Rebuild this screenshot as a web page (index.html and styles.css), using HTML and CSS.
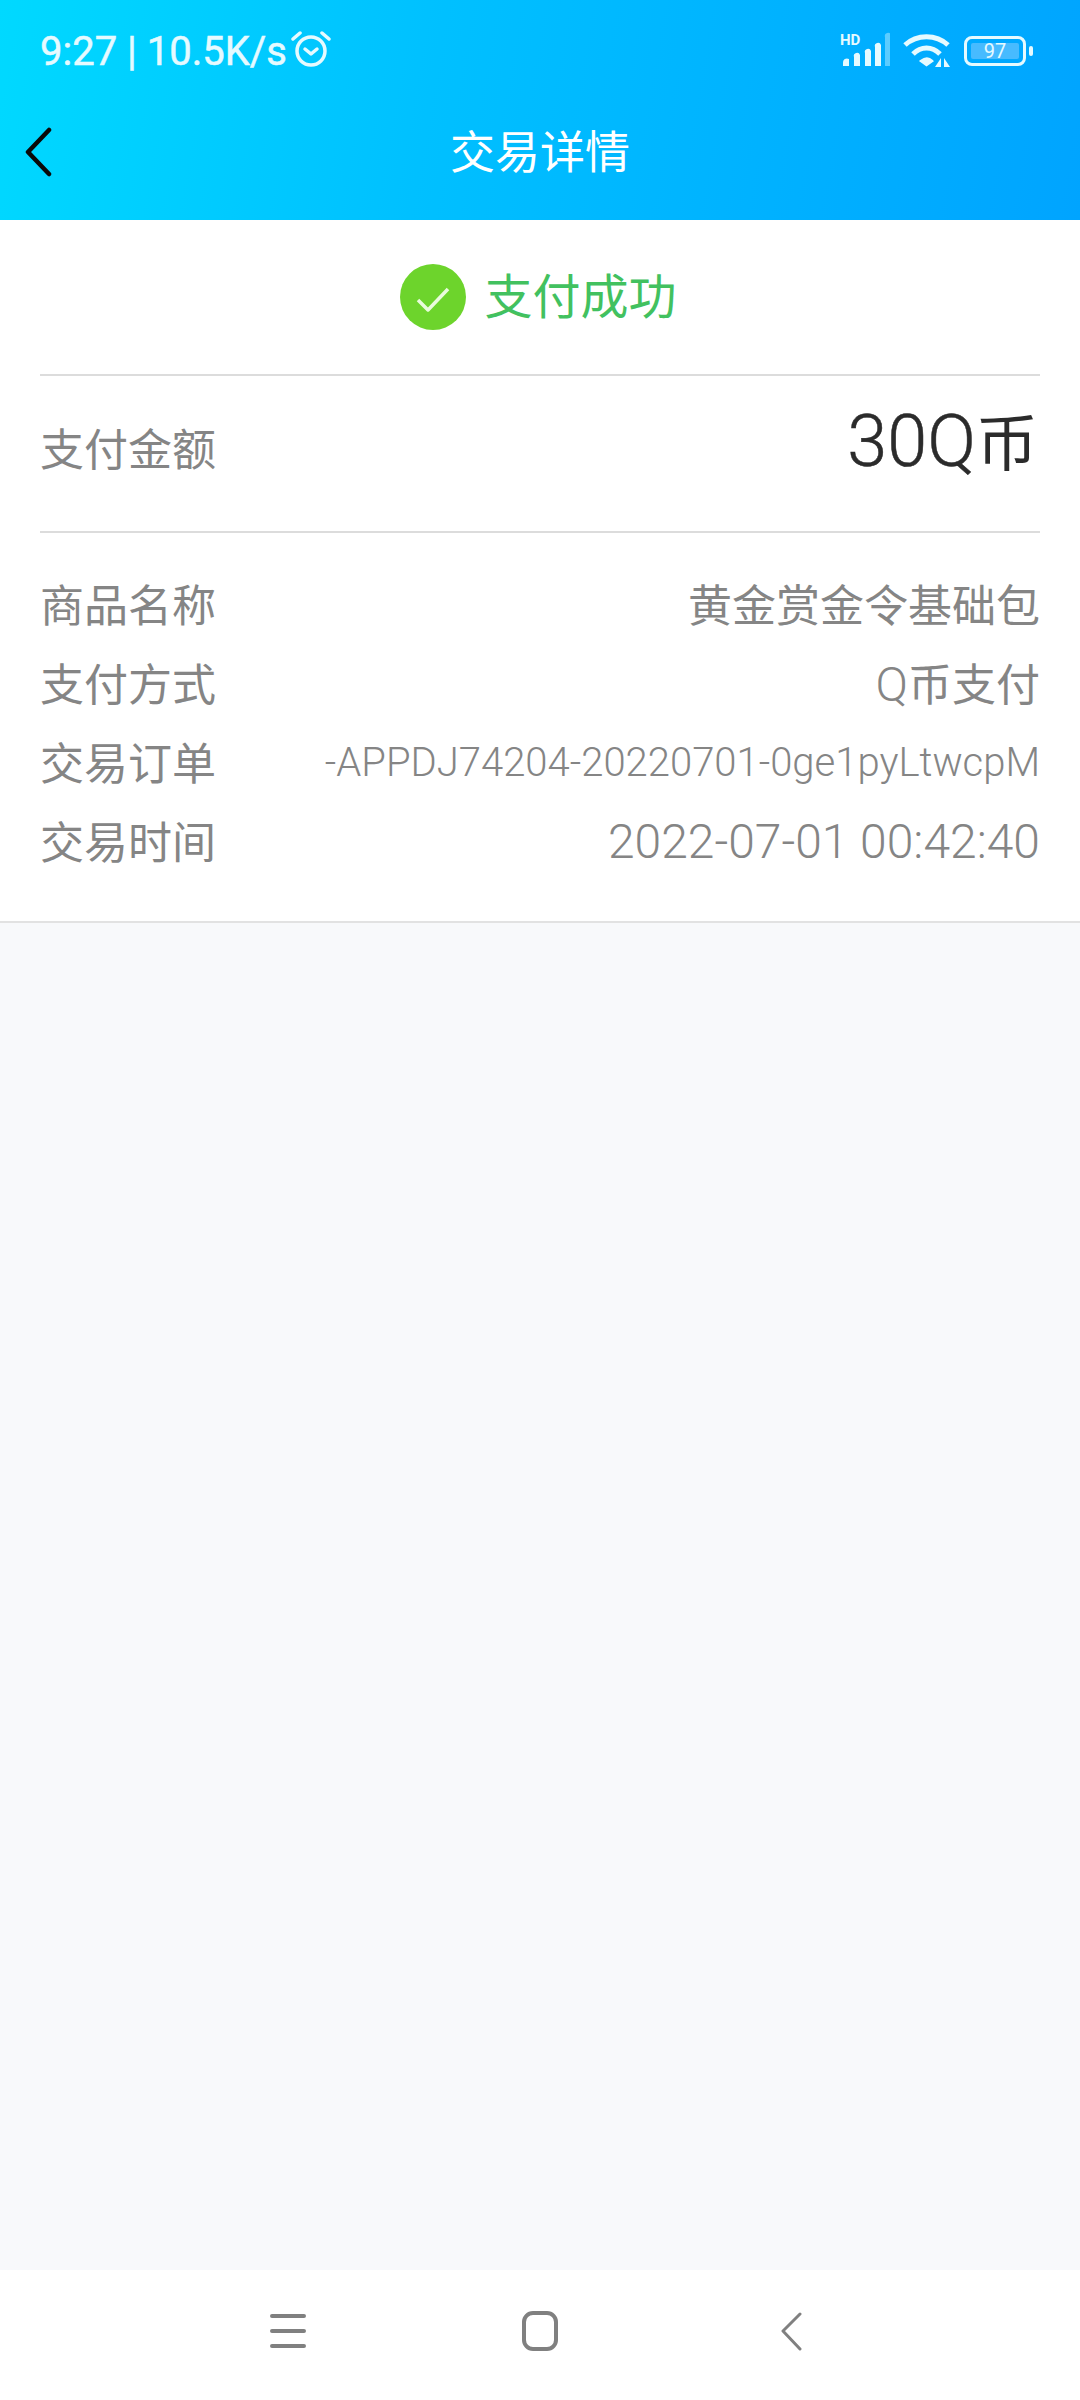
FILE: index.html
```html
<!DOCTYPE html>
<html lang="zh-CN">
<head>
    <meta charset="UTF-8">
    <meta name="viewport" content="width=device-width, initial-scale=1.0">
    <title>交易详情</title>
    <link rel="stylesheet" href="styles.css">
</head>
<body>
    <header class="top">
        <div class="status-bar">
            <div class="status-left">
                <span class="status-text">9:27 | 10.5K/s</span>
                <svg class="alarm" viewBox="0 0 40 40" width="40" height="40" fill="none" stroke="#e6faff" stroke-width="3.5" stroke-linecap="round" stroke-linejoin="round">
                    <circle cx="20" cy="22" r="14"/>
                    <path d="M14 20l6 5 6-5"/>
                    <path d="M2 10l7-6M38 10l-7-6"/>
                </svg>
            </div>
            <div class="status-right">
                <svg class="signal" viewBox="0 0 50 40" width="50" height="40">
                    <text x="0" y="14" class="hd">HD</text>
                    <path d="M3 35v-3a4 4 0 0 1 6-4v7z M14 35V26a3 3 0 0 1 6-2v11z M25 35V22a3 3 0 0 1 6-2v15z M35 35V16a3 3 0 0 1 6-2v21z" fill="#e6faff"/>
                    <path d="M45 35V6a3 3 0 0 1 6-2v31z" fill="#e6faff" opacity="0.4"/>
                </svg>
                <svg class="wifi" viewBox="0 0 48 40" width="48" height="40" fill="none" stroke="#e6faff" stroke-width="5">
                    <path d="M2 14C14 3 33 3 45 14"/>
                    <path d="M10 23C18 15 29 15 37 23"/>
                    <path d="M18 30c4-3 8-3 11 0l-5.500 4z" fill="#e6faff" stroke-width="2.500"/>
                    <path d="M38 27v9h-6zM41 27v9h6z" fill="#e6faff" stroke="none"/>
                </svg>
                <div class="battery">
                    <div class="battery-body"><span class="battery-level">97</span></div>
                    <div class="battery-tip"></div>
                </div>
            </div>
        </div>
        <div class="title-bar">
            <svg class="back" viewBox="0 0 28 50" width="28" height="50" fill="none" stroke="#0a0a0a" stroke-width="4.5" stroke-linecap="round" stroke-linejoin="round">
                <path d="M24 3L3 25l21 22"/>
            </svg>
            <h1>交易详情</h1>
        </div>
    </header>

    <main class="detail">
        <div class="result">
            <svg class="check" viewBox="0 0 66 66" width="66" height="66">
                <circle cx="33" cy="33" r="33" fill="#6dd42c"/>
                <path d="M18 36l10 10 20-21" fill="none" stroke="#e9fbdc" stroke-width="3.500" stroke-linejoin="round"/>
            </svg>
            <span>支付成功</span>
        </div>
        <div class="amount-row">
            <span class="label">支付金额</span>
            <span class="amount">30Q<span class="unit">币</span></span>
        </div>
        <div class="info">
            <div class="row">
                <span class="label">商品名称</span>
                <span class="value">黄金赏金令基础包</span>
            </div>
            <div class="row">
                <span class="label">支付方式</span>
                <span class="value"><span class="latin">Q</span>币支付</span>
            </div>
            <div class="row">
                <span class="label">交易订单</span>
                <span class="value order">-APPDJ74204-20220701-0ge1pyLtwcpM</span>
            </div>
            <div class="row">
                <span class="label">交易时间</span>
                <span class="value time">2022-07-01 00:42:40</span>
            </div>
        </div>
    </main>

    <div class="blank"></div>

    <nav class="nav-bar">
        <svg viewBox="0 0 40 40" width="40" height="40" fill="none" stroke="#808080" stroke-width="4" stroke-linecap="round">
            <path d="M5 5h32M5 20h32M5 35h32"/>
        </svg>
        <svg viewBox="0 0 40 40" width="40" height="40" fill="none" stroke="#808080" stroke-width="4">
            <rect x="3" y="2" width="32" height="36" rx="9"/>
        </svg>
        <svg viewBox="0 0 40 40" width="40" height="40" fill="none" stroke="#808080" stroke-width="3" stroke-linecap="round" stroke-linejoin="round">
            <path d="M26 3L9 20l17 18"/>
        </svg>
    </nav>
</body>
</html>
```

FILE: styles.css
```css
* {
    box-sizing: border-box;
}

body {
    margin: 0;
    width: 1080px;
    height: 2400px;
    display: flex;
    flex-direction: column;
    font-family: "Roboto", "Noto Sans CJK SC", sans-serif;
    background-color: #f8f9fb;
}

.top {
    height: 220px;
    background: linear-gradient(100deg, #00d9ff 0%, #00c0ff 40%, #00a4ff 100%);
}

.status-bar {
    height: 100px;
    padding: 31px 47px 0 40px;
    display: flex;
    justify-content: space-between;
    align-items: flex-start;
}

.status-left {
    display: flex;
    align-items: center;
    gap: 4px;
}

.status-text {
    font-size: 40px;
    line-height: 42px;
    color: #e6faff;
    -webkit-text-stroke: 0.5px #e6faff;
}

.alarm {
    margin-top: -6px;
}

.status-right {
    display: flex;
    align-items: center;
    gap: 13px;
}

.hd {
    font-size: 15px;
    font-weight: 700;
    fill: #e6faff;
}

.battery {
    display: flex;
    align-items: center;
    gap: 3px;
}

.battery-body {
    width: 62px;
    height: 30px;
    padding: 4px;
    border: 3px solid #e6faff;
    border-radius: 8px;
}

.battery-level {
    display: block;
    height: 100%;
    background-color: #47bbff;
    border-radius: 2px;
    color: #e6faff;
    font-size: 20px;
    line-height: 17px;
    text-align: center;
}

.battery-tip {
    width: 4px;
    height: 10px;
    background-color: #e6faff;
    border-radius: 2px;
}

.title-bar {
    position: relative;
    height: 120px;
    padding: 0 0 22px;
    display: flex;
    align-items: center;
    justify-content: center;
}

.title-bar h1 {
    margin: 0;
    font-size: 45px;
    font-weight: 400;
    color: #fff;
}

.back {
    position: absolute;
    left: 25px;
    top: 27px;
}

.detail {
    height: 703px;
    padding: 0 40px;
    background-color: #fff;
    border-bottom: 2px solid #e2e2e2;
}

.result {
    height: 156px;
    padding: 0 3px 8px 0;
    border-bottom: 2px solid #dcdcdc;
    display: flex;
    align-items: center;
    justify-content: center;
    gap: 18px;
    color: #42c15f;
    font-size: 48px;
}

.check {
    margin-top: 8px;
}

.amount-row {
    height: 157px;
    padding-bottom: 14px;
    border-bottom: 2px solid #dcdcdc;
    display: flex;
    align-items: center;
    justify-content: space-between;
}

.label {
    font-size: 44px;
    color: #858585;
    flex-shrink: 0;
}

.amount {
    font-size: 72px;
    line-height: 80px;
    color: #2b2b2b;
    margin-top: -6px;
    margin-right: 2px;
    font-weight: 300;
    -webkit-text-stroke: 0.5px #2b2b2b;
}

.unit {
    font-size: 62px;
    font-weight: 400;
    -webkit-text-stroke: 0;
}

.info {
    padding-top: 30px;
}

.row {
    height: 79px;
    display: flex;
    align-items: center;
    justify-content: space-between;
    gap: 40px;
}

.value {
    font-size: 44px;
    color: #858585;
    white-space: nowrap;
}

.latin {
    font-size: 48px;
    font-weight: 300;
}

.order {
    font-size: 40px;
    font-weight: 300;
    margin-top: 4px;
}

.time {
    font-size: 48px;
    font-weight: 300;
    margin-top: 4px;
}

.blank {
    flex: 1;
}

.nav-bar {
    height: 130px;
    padding: 0 266px 8px 267px;
    background-color: #fff;
    display: flex;
    align-items: center;
    justify-content: space-between;
}
```
